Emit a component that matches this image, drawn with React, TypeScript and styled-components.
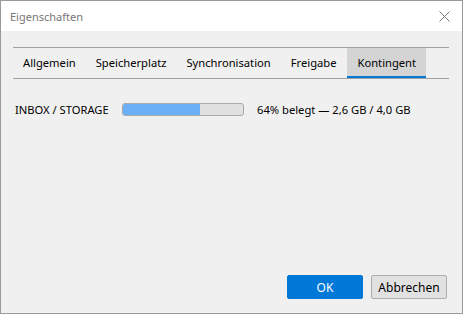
import styled, { createGlobalStyle } from "styled-components";

const GlobalStyle = createGlobalStyle`
  html, body { margin: 0; padding: 0; }
  body {
    font-family: "Noto Sans", "Open Sans", "Liberation Sans", sans-serif;
    font-size: 11.2px;
    color: #000;
  }
  * { box-sizing: border-box; }
`;

const tabs = ["Allgemein", "Speicherplatz", "Synchronisation", "Freigabe", "Kontingent"];

export default function App() {
  const percent = 64;

  return (
    <>
      <GlobalStyle />
      <Window>
        <TitleBar>
          <Title>Eigenschaften</Title>
          <CloseButton>
            <svg width="11" height="11" viewBox="0 0 11 11">
              <path d="M0.5 0.5 L10.5 10.5 M10.5 0.5 L0.5 10.5" stroke="#767676" strokeWidth="1" />
            </svg>
          </CloseButton>
        </TitleBar>
        <Body>
          <TabStrip>
            {tabs.map((t) => (
              <Tab key={t} active={t === "Kontingent"}>{t}</Tab>
            ))}
          </TabStrip>
          <QuotaRow>
            <QuotaLabel>INBOX / STORAGE</QuotaLabel>
            <Bar>
              <BarFill style={{ width: `${percent}%` }} />
            </Bar>
            <QuotaText>{percent}% belegt — 2,6 GB / 4,0 GB</QuotaText>
          </QuotaRow>
          <Footer>
            <Button primary>OK</Button>
            <Button>Abbrechen</Button>
          </Footer>
        </Body>
      </Window>
    </>
  );
}

const Window = styled.div`
  width: 463px;
  height: 314px;
  border: 1px solid #9a9a9a;
  background: #f0f0f0;
  display: flex;
  flex-direction: column;
`;

const TitleBar = styled.div`
  height: 30px;
  background: #ffffff;
  display: flex;
  align-items: center;
  justify-content: space-between;
  padding: 0 10px 0 9px;
`;

const Title = styled.span`
  color: #767676;
  font-size: 11px;
`;

const CloseButton = styled.div`
  width: 16px;
  height: 16px;
  display: flex;
  align-items: center;
  justify-content: center;
`;

const Body = styled.div`
  flex: 1;
  display: flex;
  flex-direction: column;
  padding: 16px 13px 14px 12px;
`;

const TabStrip = styled.div`
  display: flex;
  border-top: 1px solid #a0a0a0;
  border-bottom: 1px solid #a0a0a0;
  height: 32px;
`;

const Tab = styled.div<{ active?: boolean }>`
  height: 30px;
  padding: 1px 10px 0 ${(p) => (p.active ? "10px" : "10px")};
  margin-left: ${(p) => (p.active ? "1px" : "0")};
  display: flex;
  align-items: center;
  background: ${(p) => (p.active ? "#d4d4d4" : "transparent")};
  border-bottom: 2px solid ${(p) => (p.active ? "#0078d7" : "transparent")};
  white-space: nowrap;
`;

const QuotaRow = styled.div`
  display: flex;
  align-items: center;
  margin-top: 20px;
  padding-left: 2px;
  height: 20px;
`;

const QuotaLabel = styled.span`
  width: 107px;
  white-space: nowrap;
`;

const Bar = styled.div`
  width: 122px;
  height: 13px;
  border: 1px solid #a9a9a9;
  border-radius: 3px;
  background: #e1e1e1;
  overflow: hidden;
`;

const BarFill = styled.div`
  height: 100%;
  background: #6cb0f5;
`;

const QuotaText = styled.span`
  margin-left: 13px;
  white-space: nowrap;
`;

const Footer = styled.div`
  margin-top: auto;
  display: flex;
  justify-content: flex-end;
  gap: 8px;
  padding-right: 2px;
`;

const Button = styled.div<{ primary?: boolean }>`
  width: 76px;
  height: 24px;
  display: flex;
  align-items: center;
  justify-content: center;
  border-radius: 2px;
  background: ${(p) => (p.primary ? "#0078d7" : "#e1e1e1")};
  border: 1px solid ${(p) => (p.primary ? "#0078d7" : "#adadad")};
  color: ${(p) => (p.primary ? "#ffffff" : "#000000")};
  font-size: 12px;
`;
